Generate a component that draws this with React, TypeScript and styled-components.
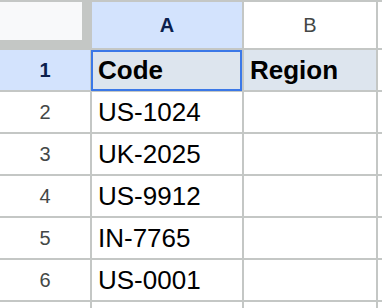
import React from 'react'
import styled, { createGlobalStyle } from 'styled-components'

const GlobalStyle = createGlobalStyle`
    html, body {
        margin: 0;
        padding: 0;
        background: #ffffff;
    }
    body {
        font-family: "Liberation Sans", Arial, sans-serif;
        overflow: hidden;
    }
`

const Sheet = styled.div`
    display: grid;
    grid-template-columns: 90px 150px 132px 1fr;
    grid-template-rows: 46px repeat(6, 40px) 1fr;
    gap: 2px;
    padding-top: 2px;
    box-sizing: border-box;
    background-color: #c4c7c5;
    width: 382px;
    height: 308px;
    overflow: hidden;
`

const Corner = styled.div`
    background-color: #c4c7c5;
    display: flex;
    align-items: flex-start;
    margin-top: -2px;
    padding-top: 2px;
`

const CornerBox = styled.div`
    width: 82px;
    height: 38px;
    background-color: #f8f9fa;
`

const HeaderCell = styled.div<{ $active?: boolean }>`
    display: flex;
    align-items: center;
    justify-content: center;
    font-size: 20px;
    font-weight: ${p => (p.$active ? 700 : 400)};
    color: ${p => (p.$active ? '#0b1f4d' : '#444746')};
    background-color: ${p => (p.$active ? '#d3e3fd' : '#ffffff')};
`

const Cell = styled.div<{ $head?: boolean; $selected?: boolean }>`
    position: relative;
    display: flex;
    align-items: center;
    padding-left: 6px;
    font-size: 26px;
    color: #000000;
    font-weight: ${p => (p.$head ? 700 : 400)};
    background-color: ${p => (p.$head ? '#dde5ee' : '#ffffff')};
    white-space: nowrap;

    ${p =>
        p.$selected &&
        `
        &::after {
            content: '';
            position: absolute;
            top: 0;
            left: -1px;
            right: 0;
            bottom: -1px;
            border: 2px solid #3b78e7;
            pointer-events: none;
        }
    `}
`

const Filler = styled.div`
    background-color: #ffffff;
`

const rows = ['US-1024', 'UK-2025', 'US-9912', 'IN-7765', 'US-0001']

function App() {
    return (
        <>
            <GlobalStyle />
            <Sheet>
                <Corner>
                    <CornerBox />
                </Corner>
                <HeaderCell $active>A</HeaderCell>
                <HeaderCell>B</HeaderCell>
                <Filler />

                <HeaderCell $active>1</HeaderCell>
                <Cell $head $selected>Code</Cell>
                <Cell $head>Region</Cell>
                <Filler />

                {rows.map((code, i) => (
                    <React.Fragment key={code}>
                        <HeaderCell>{i + 2}</HeaderCell>
                        <Cell>{code}</Cell>
                        <Cell />
                        <Filler />
                    </React.Fragment>
                ))}

                <HeaderCell />
                <Cell />
                <Cell />
                <Filler />
            </Sheet>
        </>
    )
}

export default App
